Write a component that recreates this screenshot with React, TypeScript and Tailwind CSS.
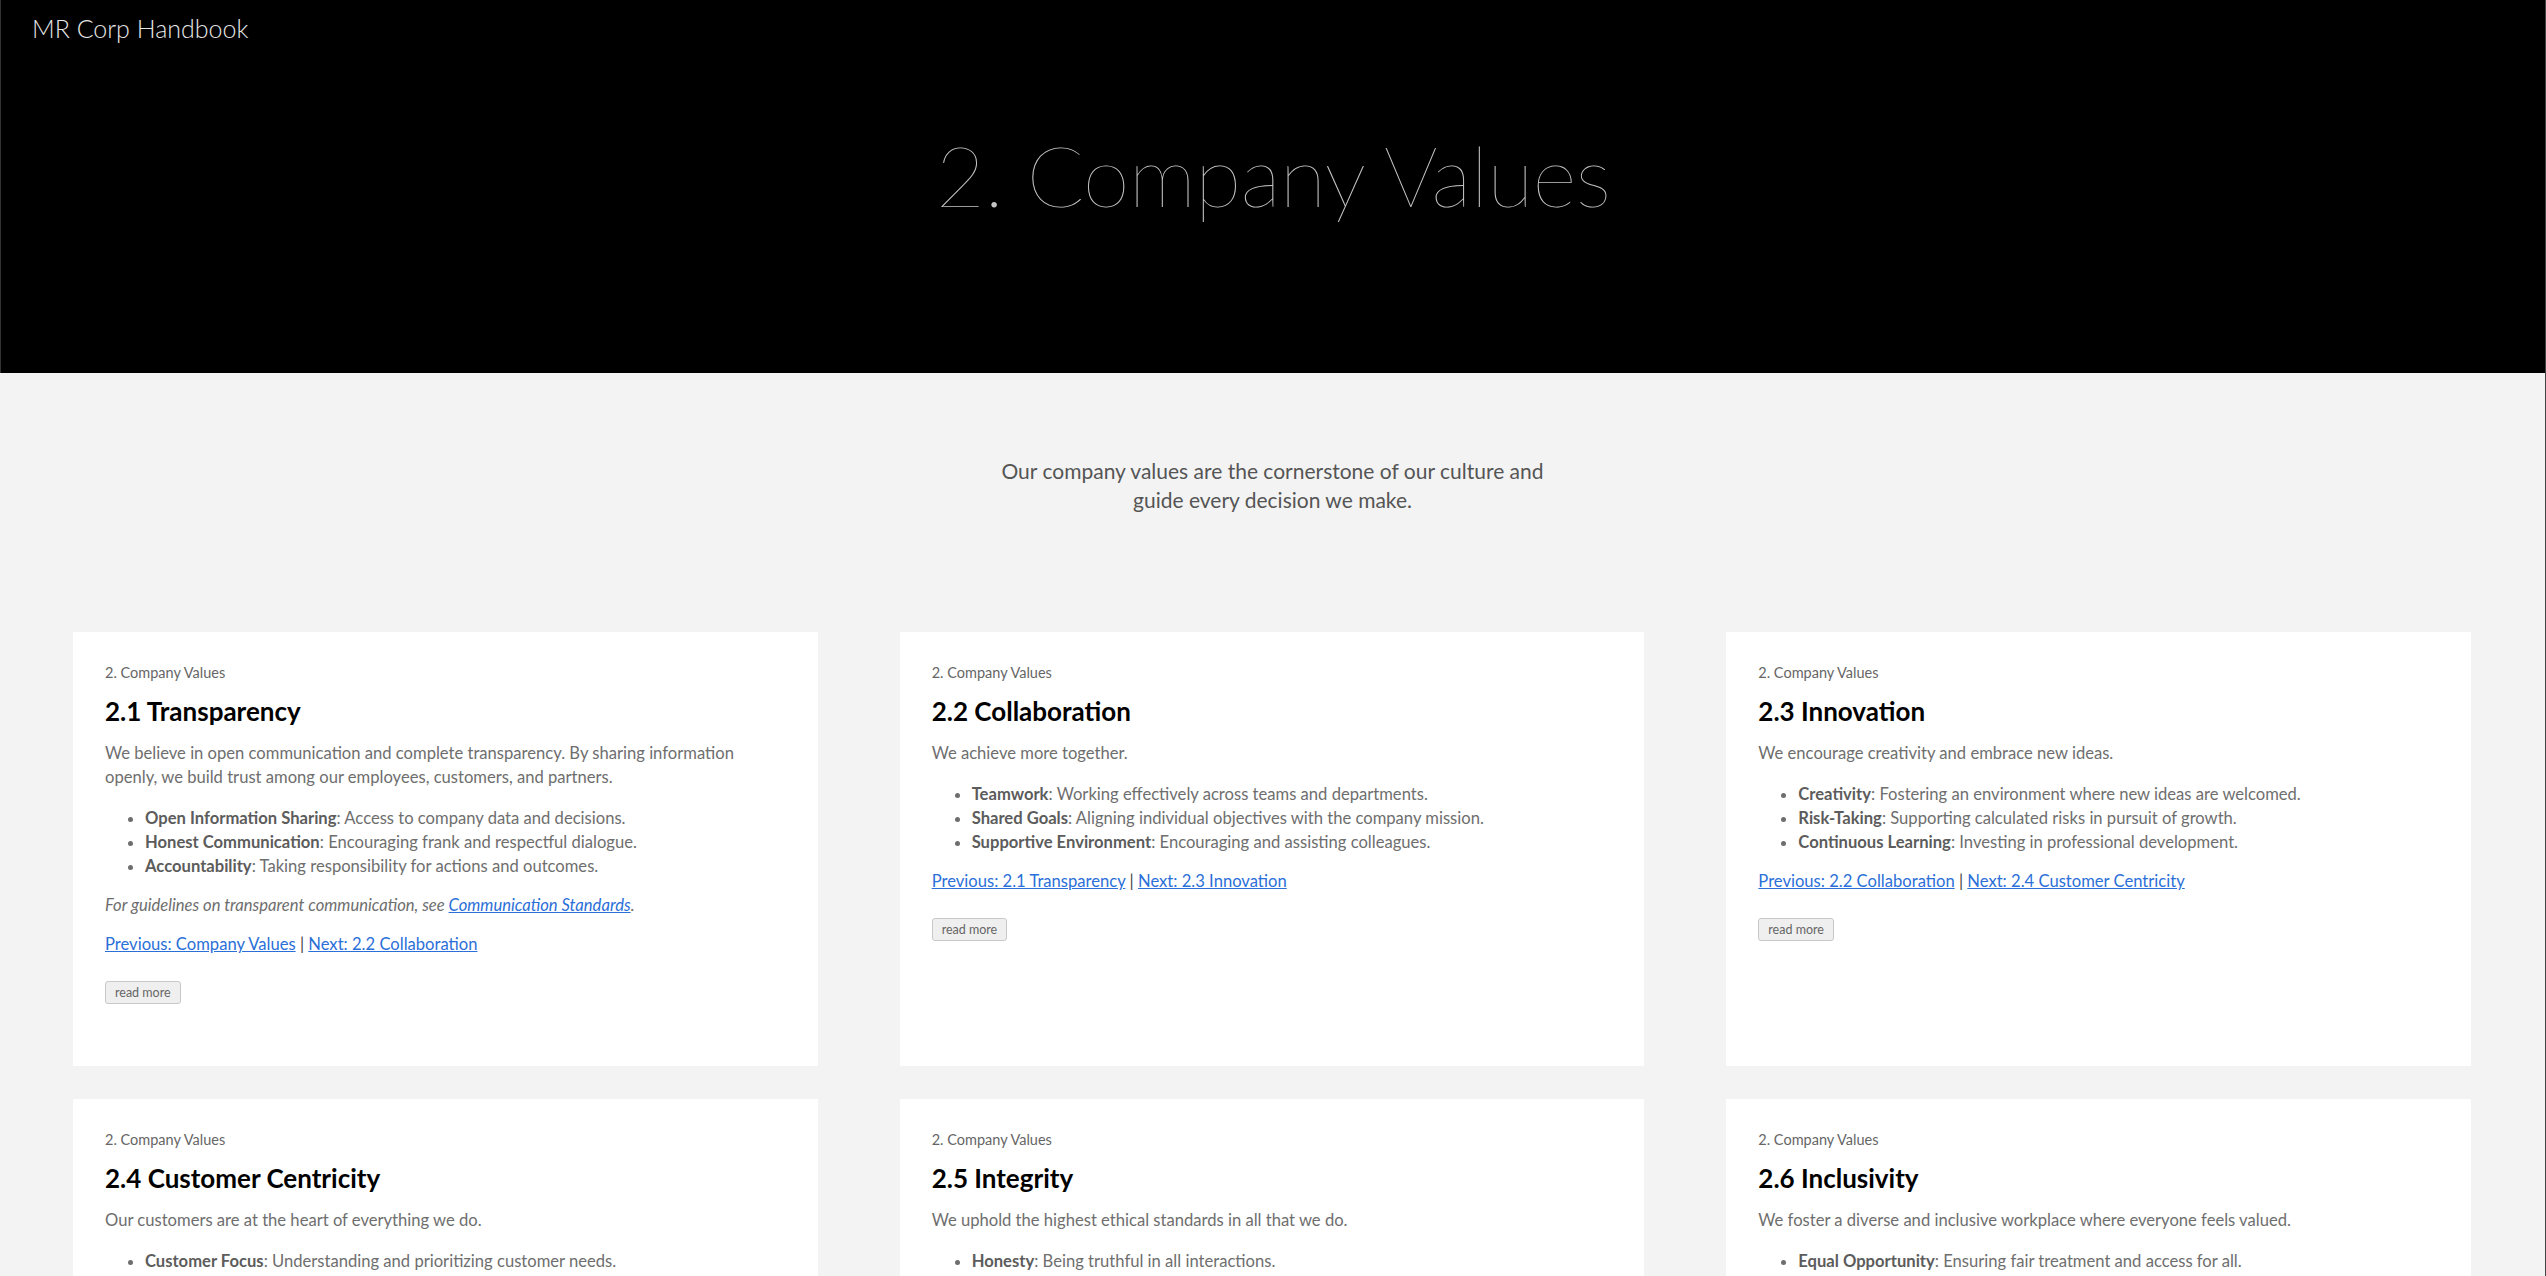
import React from "react";

type Item = { b: string; t: string };
type Card = {
  title: string;
  intro: string;
  items: Item[];
  note?: boolean;
  prev: string;
  next: string;
};

const cards: Card[] = [
  {
    title: "2.1 Transparency",
    intro:
      "We believe in open communication and complete transparency. By sharing information openly, we build trust among our employees, customers, and partners.",
    items: [
      { b: "Open Information Sharing", t: "Access to company data and decisions." },
      { b: "Honest Communication", t: "Encouraging frank and respectful dialogue." },
      { b: "Accountability", t: "Taking responsibility for actions and outcomes." },
    ],
    note: true,
    prev: "Previous: Company Values",
    next: "Next: 2.2 Collaboration",
  },
  {
    title: "2.2 Collaboration",
    intro: "We achieve more together.",
    items: [
      { b: "Teamwork", t: "Working effectively across teams and departments." },
      { b: "Shared Goals", t: "Aligning individual objectives with the company mission." },
      { b: "Supportive Environment", t: "Encouraging and assisting colleagues." },
    ],
    prev: "Previous: 2.1 Transparency",
    next: "Next: 2.3 Innovation",
  },
  {
    title: "2.3 Innovation",
    intro: "We encourage creativity and embrace new ideas.",
    items: [
      { b: "Creativity", t: "Fostering an environment where new ideas are welcomed." },
      { b: "Risk-Taking", t: "Supporting calculated risks in pursuit of growth." },
      { b: "Continuous Learning", t: "Investing in professional development." },
    ],
    prev: "Previous: 2.2 Collaboration",
    next: "Next: 2.4 Customer Centricity",
  },
  {
    title: "2.4 Customer Centricity",
    intro: "Our customers are at the heart of everything we do.",
    items: [
      { b: "Customer Focus", t: "Understanding and prioritizing customer needs." },
      { b: "Service Excellence", t: "Delivering exceptional experiences at every touchpoint." },
      { b: "Feedback", t: "Listening and acting on customer input." },
    ],
    prev: "Previous: 2.3 Innovation",
    next: "Next: 2.5 Integrity",
  },
  {
    title: "2.5 Integrity",
    intro: "We uphold the highest ethical standards in all that we do.",
    items: [
      { b: "Honesty", t: "Being truthful in all interactions." },
      { b: "Fairness", t: "Treating everyone with equity and respect." },
      { b: "Ethical Conduct", t: "Following our code of conduct at all times." },
    ],
    prev: "Previous: 2.4 Customer Centricity",
    next: "Next: 2.6 Inclusivity",
  },
  {
    title: "2.6 Inclusivity",
    intro: "We foster a diverse and inclusive workplace where everyone feels valued.",
    items: [
      { b: "Equal Opportunity", t: "Ensuring fair treatment and access for all." },
      { b: "Diversity", t: "Celebrating different backgrounds and perspectives." },
      { b: "Belonging", t: "Creating a welcoming environment for everyone." },
    ],
    prev: "Previous: 2.5 Integrity",
    next: "Next: 3. Workplace Policies",
  },
];

function ValueCard({ c }: { c: Card }) {
  return (
    <div className="bg-white px-[32px] pt-[31px] pb-[62px]">
      <div className="text-[14.5px] leading-[20px] text-[#666]">2. Company Values</div>
      <h2 className="mt-[12px] text-[26px] leading-[32px] font-bold text-black">{c.title}</h2>
      <p className="mt-[14px] text-[16.6px] leading-[24px] text-[#6e6e6e]">{c.intro}</p>
      <ul className="mt-[17px] list-disc pl-[40px] text-[16.6px] leading-[24px] text-[#6e6e6e] marker:text-[#6e6e6e]">
        {c.items.map((it) => (
          <li key={it.b}>
            <strong className="font-bold text-[#5c5c5c]">{it.b}</strong>: {it.t}
          </li>
        ))}
      </ul>
      {c.note && (
        <p className="mt-[15px] text-[16.6px] leading-[24px] italic text-[#6e6e6e]">
          For guidelines on transparent communication, see{" "}
          <a href="#" className="text-[#2b6fd8] underline">
            Communication Standards
          </a>
          .
        </p>
      )}
      <p className="mt-[15px] text-[16.6px] leading-[24px] text-[#444]">
        <a href="#" className="text-[#2b6fd8] underline">
          {c.prev}
        </a>{" "}
        |{" "}
        <a href="#" className="text-[#2b6fd8] underline">
          {c.next}
        </a>
      </p>
      <button className="mt-[25px] h-[23px] rounded-[3px] border border-[#c8c8c8] bg-[#efefef] px-[9px] text-[12.5px] leading-[21px] text-[#666]">
        read more
      </button>
    </div>
  );
}

export default function App() {
  return (
    <div
      className="min-h-screen border-r border-[#444] bg-[#f3f3f3]"
      style={{ fontFamily: "Lato, 'Noto Sans', sans-serif" }}
    >
      <header className="flex h-[373px] flex-col border-l border-[#333] bg-black">
        <div className="px-[31px] pt-[12px] text-[25px] leading-[32px] font-light text-[#e6e6e6]">
          MR Corp Handbook
        </div>
        <h1 className="mt-[88px] text-center text-[85px] leading-[85px] font-extralight tracking-[-0.01em] text-[#c4c4c4]">
          2. Company Values
        </h1>
      </header>
      <p className="mx-auto mt-[83px] max-w-[585px] text-center text-[21px] leading-[29px] text-[#555]">
        Our company values are the cornerstone of our culture and guide every decision we make.
      </p>
      <div className="mt-[118px] grid grid-cols-3 gap-x-[82px] gap-y-[33px] pl-[73px] pr-[74px] pb-[60px]">
        {cards.map((c) => (
          <ValueCard key={c.title} c={c} />
        ))}
      </div>
    </div>
  );
}
